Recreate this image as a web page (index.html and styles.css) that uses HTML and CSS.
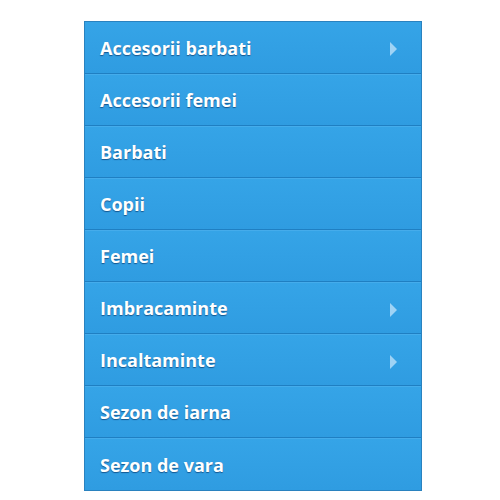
FILE: index.html
```html
<!DOCTYPE html>
<html>
<head>
<meta charset="utf-8">
<link rel="stylesheet" href="styles.css">
</head>
<body>
<ul class="menu">
  <li class="item has-sub"><span class="label">Accesorii barbati</span><span class="arrow"></span></li>
  <li class="item"><span class="label">Accesorii femei</span></li>
  <li class="item"><span class="label">Barbati</span></li>
  <li class="item"><span class="label">Copii</span></li>
  <li class="item"><span class="label">Femei</span></li>
  <li class="item has-sub"><span class="label">Imbracaminte</span><span class="arrow"></span></li>
  <li class="item has-sub"><span class="label">Incaltaminte</span><span class="arrow"></span></li>
  <li class="item"><span class="label">Sezon de iarna</span></li>
  <li class="item"><span class="label">Sezon de vara</span></li>
</ul>
</body>
</html>
```
FILE: styles.css
```css
html, body {
  margin: 0;
  padding: 0;
  background: #ffffff;
}
body {
  padding: 21px 0 0 84px;
}
.menu {
  list-style: none;
  margin: 0;
  padding: 0;
  width: 338px;
  box-sizing: border-box;
  border: 1px solid #2a82bf;
  display: flex;
  flex-direction: column;
}
.item {
  height: 52px;
  box-sizing: border-box;
  display: flex;
  align-items: center;
  justify-content: space-between;
  padding: 0 24px 0 15px;
  background: linear-gradient(to bottom, #35a4e7 0%, #2f9ce1 100%);
  border-top: 1px solid #45aceb;
  border-bottom: 1px solid #1f7fc2;
}
.item:first-child {
  border-top: 0;
}
.item:last-child {
  border-bottom: 0;
}
.label {
  font-family: "Open Sans", sans-serif;
  font-weight: 700;
  font-size: 18px;
  color: #ffffff;
  text-shadow: 0 1px 1px rgba(0, 40, 90, 0.6);
}
.arrow {
  width: 0;
  height: 0;
  margin-top: 3px;
  border-top: 7px solid transparent;
  border-bottom: 7px solid transparent;
  border-left: 7px solid #9fd3f5;
}
```
